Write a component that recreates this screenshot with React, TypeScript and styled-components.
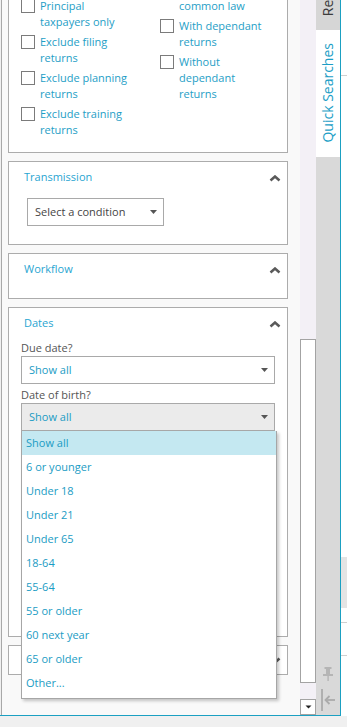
import React from 'react';
import styled, { createGlobalStyle } from 'styled-components';

const Global = createGlobalStyle`
  html, body { margin: 0; padding: 0; background: #f0f0f0; }
  body { font-family: "Open Sans", "Segoe UI", sans-serif; font-size: 11px; line-height: 16px; }
  #root { width: 347px; height: 727px; }
`;

const Screen = styled.div`
  width: 347px;
  height: 727px;
  overflow: hidden;
  background: #f0f0f0;
`;

const TopRow = styled.div`
  display: flex;
  height: 716px;
`;

const Window = styled.div`
  width: 341px;
  height: 716px;
  box-sizing: border-box;
  flex: none;
  padding-left: 1px;
  background: #f0f0f0;
  border-right: 1px solid #1ba0c2;
  border-bottom: 1px solid #1ba0c2;
  display: flex;
`;

const Inner = styled.div`
  flex: 1;
  display: flex;
  border-left: 1px solid #a8a8a8;
  min-width: 0;
`;

const ScrollArea = styled.div`
  width: 298px;
  flex: none;
  background: #f9f9f9;
  overflow: hidden;
`;

const ScrollContent = styled.div<{ $offset: number }>`
  margin-top: ${(p) => -p.$offset}px;
  padding: 0 12px 0 6px;
  display: flex;
  flex-direction: column;
  gap: 8px;
`;

const Card = styled.section<{ $height?: number }>`
  background: #fff;
  border: 1px solid #acacac;
  box-sizing: border-box;
  ${(p) => (p.$height ? `height: ${p.$height}px;` : '')}
`;

const CheckGrid = styled.div`
  display: grid;
  grid-template-columns: 139px 1fr;
  padding: 8px 12px 14px;
`;

const CheckColumn = styled.div<{ $lead?: number }>`
  display: flex;
  flex-direction: column;
  gap: 4px;
  padding-top: ${(p) => p.$lead ?? 0}px;
`;

const CheckItem = styled.label`
  display: flex;
  align-items: flex-start;
  gap: 5px;
`;

const Box = styled.span`
  width: 14px;
  height: 14px;
  box-sizing: border-box;
  border: 1px solid #7b7b7b;
  background: #fff;
  margin-top: 1px;
  flex: none;
`;

const CheckLabel = styled.span`
  width: 94px;
  color: #1e9ec6;
  line-height: 16px;
`;

const CardHeader = styled.div<{ $top?: number }>`
  display: flex;
  align-items: flex-start;
  justify-content: space-between;
  padding: ${(p) => p.$top ?? 8}px 6px 0 15px;
  height: 16px;
`;

const CardTitle = styled.h3`
  margin: 0;
  font-size: 11px;
  font-weight: 400;
  line-height: 14px;
  color: #29a5d1;
`;

const HeaderToggle = styled.span`
  align-self: center;
  display: flex;
`;

const CardBody = styled.div<{ $pad: string }>`
  padding: ${(p) => p.$pad};
`;

const Fields = styled.div`
  display: flex;
  flex-direction: column;
  gap: 3px;
  padding: 8px 12px 0 12px;
`;

const Field = styled.div`
  display: flex;
  flex-direction: column;
`;

const FieldLabel = styled.span`
  color: #555;
  line-height: 16px;
`;

const SelectWrap = styled.div`
  position: relative;
`;

const Select = styled.div<{ $width?: number; $open?: boolean; $muted?: boolean }>`
  display: flex;
  align-items: center;
  justify-content: space-between;
  box-sizing: border-box;
  height: 28px;
  width: ${(p) => (p.$width ? `${p.$width}px` : '100%')};
  padding: 0 6px 0 7px;
  border: 1px solid #a9a9a9;
  background: ${(p) => (p.$open ? '#ebebeb' : '#fff')};
  color: ${(p) => (p.$muted ? '#444' : '#1b9cc4')};
`;

const Menu = styled.ul`
  position: absolute;
  z-index: 10;
  top: 100%;
  left: 0;
  width: 256px;
  box-sizing: border-box;
  margin: 0;
  padding: 0 0 3px;
  list-style: none;
  background: #fff;
  border: 1px solid #a6a6a6;
  border-top: none;
  box-shadow: 2px 2px 3px rgba(0, 0, 0, 0.22);
`;

const MenuItem = styled.li<{ $active?: boolean }>`
  height: 24px;
  line-height: 24px;
  padding-left: 4px;
  color: #1b9cc4;
  background: ${(p) => (p.$active ? '#c4e8f1' : 'transparent')};
`;

const Scrollbar = styled.div`
  width: 16px;
  flex: none;
  display: flex;
  flex-direction: column;
  background: #f3f0f6;
`;

const Track = styled.div<{ $thumbTop: number }>`
  flex: 1;
  padding-top: ${(p) => p.$thumbTop}px;
`;

const Thumb = styled.div<{ $height: number }>`
  height: ${(p) => p.$height}px;
  box-sizing: border-box;
  border: 1px solid #a3a3a3;
  background: #fff;
`;

const ArrowButton = styled.div`
  height: 16px;
  box-sizing: border-box;
  border: 1px solid #a3a3a3;
  background: #fff;
  display: flex;
  align-items: center;
  justify-content: center;
`;

const TabStrip = styled.div`
  width: 24px;
  flex: none;
  background: #d9d9d9;
  display: flex;
  flex-direction: column;
`;

const Tab = styled.div<{ $active?: boolean; $clip?: number }>`
  display: flex;
  flex-direction: column;
  justify-content: flex-end;
  align-items: center;
  box-sizing: border-box;
  overflow: hidden;
  background: ${(p) => (p.$active ? '#fff' : '#d6d6d6')};
  padding: ${(p) => (p.$clip ? '0 0 14px' : '13px 0 14px')};
  ${(p) => (p.$clip ? `height: ${p.$clip}px;` : '')}
`;

const TabLabel = styled.span<{ $active?: boolean }>`
  writing-mode: vertical-rl;
  transform: rotate(180deg);
  white-space: nowrap;
  font-size: 14px;
  line-height: 20px;
  color: ${(p) => (p.$active ? '#1c9ec6' : '#3c3c3c')};
`;

const StripTools = styled.div`
  margin-top: auto;
  display: flex;
  flex-direction: column;
  align-items: center;
  gap: 8px;
  padding-bottom: 4px;
`;

const RightStrip = styled.div`
  flex: 1;
  background: #fff;
  display: flex;
  flex-direction: column;
`;

const RightBlock = styled.div<{ $h: number; $bg?: string; $rule?: boolean }>`
  height: ${(p) => p.$h}px;
  flex: none;
  background: ${(p) => p.$bg ?? '#fff'};
  ${(p) => (p.$rule ? 'border-bottom: 1px solid #cfcfcf;' : '')}
`;

const Chevron = ({ down }: { down?: boolean }) => (
  <svg width="12" height="7" viewBox="0 0 12 7">
    <path
      d={down ? 'M1.5 1.5 L6 5.5 L10.5 1.5' : 'M1.5 5.5 L6 1.5 L10.5 5.5'}
      stroke="#5a5a5a"
      strokeWidth="2.5"
      fill="none"
    />
  </svg>
);

const Caret = () => (
  <svg width="7" height="4" viewBox="0 0 7 4">
    <polygon points="0,0 7,0 3.5,4" fill="#555" />
  </svg>
);

const SmallCaret = () => (
  <svg width="7" height="4" viewBox="0 0 7 4">
    <polygon points="0.5,0.5 6.5,0.5 3.5,3.5" fill="#222" />
  </svg>
);

const PinIcon = () => (
  <svg width="10" height="14" viewBox="0 0 10 14">
    <g fill="#b5b5b5">
      <rect x="1.5" y="0" width="7" height="2" />
      <rect x="3" y="2" width="4" height="5" />
      <rect x="0" y="7" width="10" height="2" />
      <rect x="4.4" y="9" width="1.4" height="5" />
    </g>
  </svg>
);

const CollapseIcon = () => (
  <svg width="14" height="22" viewBox="0 0 14 22">
    <g fill="none" stroke="#ababab" strokeWidth="1.8">
      <path d="M1 0 V22" />
      <path d="M4.5 11 H14" />
      <path d="M8.5 7 L4.5 11 L8.5 15" />
    </g>
  </svg>
);

const leftChecks = [
  'Principal taxpayers only',
  'Exclude filing returns',
  'Exclude planning returns',
  'Exclude training returns',
];

const rightChecks = ['Married or common law', 'With dependant returns', 'Without dependant returns'];

const ageOptions = [
  'Show all',
  '6 or younger',
  'Under 18',
  'Under 21',
  'Under 65',
  '18-64',
  '55-64',
  '55 or older',
  '60 next year',
  '65 or older',
  'Other...',
];

export default function App() {
  return (
    <Screen>
      <Global />
      <TopRow>
        <Window>
          <Inner>
            <ScrollArea>
              <ScrollContent $offset={27}>
                <Card>
                  <CheckGrid>
                    <CheckColumn $lead={16}>
                      {leftChecks.map((t) => (
                        <CheckItem key={t}>
                          <Box />
                          <CheckLabel>{t}</CheckLabel>
                        </CheckItem>
                      ))}
                    </CheckColumn>
                    <CheckColumn>
                      {rightChecks.map((t) => (
                        <CheckItem key={t}>
                          <Box />
                          <CheckLabel>{t}</CheckLabel>
                        </CheckItem>
                      ))}
                    </CheckColumn>
                  </CheckGrid>
                </Card>

                <Card>
                  <CardHeader>
                    <CardTitle>Transmission</CardTitle>
                    <HeaderToggle>
                      <Chevron />
                    </HeaderToggle>
                  </CardHeader>
                  <CardBody $pad="12px 0 18px 18px">
                    <Select $width={137} $muted>
                      <span>Select a condition</span>
                      <Caret />
                    </Select>
                  </CardBody>
                </Card>

                <Card>
                  <CardHeader>
                    <CardTitle>Workflow</CardTitle>
                    <HeaderToggle>
                      <Chevron />
                    </HeaderToggle>
                  </CardHeader>
                  <CardBody $pad="20px 0 0 0" />
                </Card>

                <Card $height={330}>
                  <CardHeader>
                    <CardTitle>Dates</CardTitle>
                    <HeaderToggle>
                      <Chevron />
                    </HeaderToggle>
                  </CardHeader>
                  <Fields>
                    <Field>
                      <FieldLabel>Due date?</FieldLabel>
                      <Select>
                        <span>Show all</span>
                        <Caret />
                      </Select>
                    </Field>
                    <Field>
                      <FieldLabel>Date of birth?</FieldLabel>
                      <SelectWrap>
                        <Select $open>
                          <span>Show all</span>
                          <Caret />
                        </Select>
                        <Menu>
                          {ageOptions.map((o, i) => (
                            <MenuItem key={o} $active={i === 0}>
                              {o}
                            </MenuItem>
                          ))}
                        </Menu>
                      </SelectWrap>
                    </Field>
                  </Fields>
                </Card>

                <Card $height={30}>
                  <CardHeader $top={6}>
                    <CardTitle />
                    <HeaderToggle>
                      <Chevron down />
                    </HeaderToggle>
                  </CardHeader>
                </Card>
              </ScrollContent>
            </ScrollArea>

            <Scrollbar>
              <Track $thumbTop={339}>
                <Thumb $height={344} />
              </Track>
              <ArrowButton>
                <SmallCaret />
              </ArrowButton>
            </Scrollbar>

            <TabStrip>
              <Tab $clip={30}>
                <TabLabel>Recent Searches</TabLabel>
              </Tab>
              <Tab $active>
                <TabLabel $active>Quick Searches</TabLabel>
              </Tab>
              <StripTools>
                <PinIcon />
                <CollapseIcon />
              </StripTools>
            </TabStrip>
          </Inner>
        </Window>
        <RightStrip>
          <RightBlock $h={75} $rule />
          <RightBlock $h={481} />
          <RightBlock $h={51} $bg="#e4e4e4" />
          <RightBlock $h={14} $rule />
          <RightBlock $h={32} $rule />
        </RightStrip>
      </TopRow>
    </Screen>
  );
}
